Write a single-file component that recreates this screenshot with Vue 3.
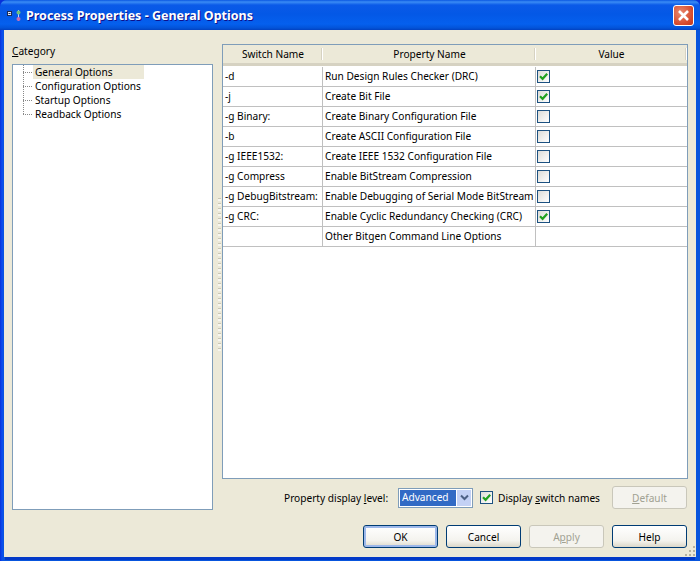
<script setup>
const rows = [
  ['-d', 'Run Design Rules Checker (DRC)', true],
  ['-j', 'Create Bit File', true],
  ['-g Binary:', 'Create Binary Configuration File', false],
  ['-b', 'Create ASCII Configuration File', false],
  ['-g IEEE1532:', 'Create IEEE 1532 Configuration File', false],
  ['-g Compress', 'Enable BitStream Compression', false],
  ['-g DebugBitstream:', 'Enable Debugging of Serial Mode BitStream', false],
  ['-g CRC:', 'Enable Cyclic Redundancy Checking (CRC)', true],
  ['', 'Other Bitgen Command Line Options', null],
]
const cats = ['General Options', 'Configuration Options', 'Startup Options', 'Readback Options']
</script>

<template>
  <div class="win">
    <div class="titlebar">
      <svg class="appicon" width="18" height="15" viewBox="0 0 18 15">
        <rect x="1.5" y="3.5" width="4" height="4" fill="#e6ecf8" stroke="#1a2a55" />
        <path d="M2.5 5.5h2" stroke="#1a2a55" />
        <path d="M12.5 2v11" stroke="#bcd8ff" fill="none" />
        <circle cx="12.5" cy="4.5" r="2" fill="#6fc07a" />
        <circle cx="12.5" cy="11" r="2" fill="#c76bb0" />
      </svg>
      <span class="title">Process Properties - General Options</span>
      <button class="close">
        <svg width="13" height="13" viewBox="0 0 13 13"><path d="M2 2l9 9M11 2l-9 9" stroke="#fff" stroke-width="2.6" /></svg>
      </button>
    </div>
    <div class="body">
      <div class="main">
        <div class="left">
          <div class="cat-label"><u>C</u>ategory</div>
          <div class="tree">
            <div v-for="(c, i) in cats" :key="c" class="tree-row" :class="{ last: i === cats.length - 1 }">
              <span class="dots"></span>
              <span class="tree-text" :class="{ sel: i === 0 }">{{ c }}</span>
            </div>
          </div>
        </div>
        <div class="grip"></div>
        <div class="right">
          <div class="table">
            <div class="thead">
              <div class="th c1">Switch Name</div>
              <div class="th c2">Property Name</div>
              <div class="th c3">Value</div>
            </div>
            <div v-for="r in rows" :key="r[1]" class="tr">
              <div class="td c1">{{ r[0] }}</div>
              <div class="td c2">{{ r[1] }}</div>
              <div class="td c3">
                <span v-if="r[2] !== null" class="cb">
                  <svg v-if="r[2]" width="11" height="11" viewBox="0 0 11 11"><path d="M2 5.2l2.6 2.6 4.6-5" fill="none" stroke="#21a121" stroke-width="2.2" /></svg>
                </span>
              </div>
            </div>
          </div>
          <div class="opts">
            <span class="lvl">Property display <u>l</u>evel:</span>
            <div class="select">
              <span class="sel-val">Advanced</span>
              <span class="sel-btn">
                <svg width="9" height="7" viewBox="0 0 9 7"><path d="M1 1.5l3.5 3.5 3.5-3.5" fill="none" stroke="#4d6185" stroke-width="2" /></svg>
              </span>
            </div>
            <span class="cb small">
              <svg width="11" height="11" viewBox="0 0 11 11"><path d="M2 5.2l2.6 2.6 4.6-5" fill="none" stroke="#21a121" stroke-width="2.2" /></svg>
            </span>
            <span class="disp">Display <u>s</u>witch names</span>
            <button class="btn dis def"><span><u>D</u>efault</span></button>
          </div>
        </div>
      </div>
      <div class="actions">
        <button class="btn primary">OK</button>
        <button class="btn">Cancel</button>
        <button class="btn dis"><span>A<u>p</u>ply</span></button>
        <button class="btn">Help</button>
      </div>
      <svg class="sizer" width="12" height="12" viewBox="0 0 12 12" fill="#b5b2a0">
        <rect x="9" y="1" width="2" height="2" /><rect x="5" y="5" width="2" height="2" /><rect x="9" y="5" width="2" height="2" />
        <rect x="1" y="9" width="2" height="2" /><rect x="5" y="9" width="2" height="2" /><rect x="9" y="9" width="2" height="2" />
      </svg>
    </div>
  </div>
</template>

<style>
html, body { margin: 0; padding: 0; background: #0831d9; }
</style>

<style scoped>
.win {
  width: 700px;
  height: 561px;
  box-sizing: border-box;
  display: flex;
  flex-direction: column;
  font-family: "Noto Sans", "Liberation Sans", sans-serif;
  font-size: 10.15px;
  color: #000;
  border-radius: 7px 7px 0 0;
  overflow: hidden;
  background: linear-gradient(90deg, #0831d9 0, #0a4df0 2px, #0855dd 4px);
}
.titlebar {
  height: 30px;
  flex: none;
  display: flex;
  align-items: center;
  padding: 0 6px 0 6px;
  background: linear-gradient(180deg, #0a57e2 0, #3a8cf5 2px, #0a5ae8 5px, #0458e6 14px, #0560ee 24px, #0353d8 28px, #0241c0 30px);
  color: #fff;
}
.appicon { flex: none; margin-right: 2px; }
.title {
  flex: 1;
  padding-top: 3px;
  font: 700 12.5px/1 "Noto Sans", "Liberation Sans", sans-serif;
  text-shadow: 1px 1px 0 #0f1089;
}
.close {
  width: 21px;
  height: 21px;
  padding: 0;
  border: 1px solid #fff;
  border-radius: 3px;
  display: flex;
  align-items: center;
  justify-content: center;
  background: radial-gradient(circle at 35% 35%, #e98a70, #d5482a 70%, #c23a1e);
}
.body {
  position: relative;
  flex: 1;
  box-sizing: border-box;
  margin: 0 4px 4px;
  background: #ece9d8;
  padding: 14px 8px 0;
  display: flex;
  flex-direction: column;
  min-height: 0;
  box-shadow: 0 4px 0 -1px #0239c7;
}
.main { display: flex; height: 466px; flex: none; }
.left { width: 201px; flex: none; display: flex; flex-direction: column; }
.cat-label { height: 20px; line-height: 14px; }
.tree {
  flex: 1;
  background: #fff;
  border: 1px solid #7f9db9;
  padding: 0 0 0 8px;
}
.tree-row { position: relative; display: flex; align-items: center; height: 14px; }
.dots {
  width: 12px;
  flex: none;
  height: 14px;
  box-sizing: border-box;
  background:
    repeating-linear-gradient(90deg, #888 0 1px, transparent 1px 2px) 2px 7px / 10px 1px no-repeat,
    repeating-linear-gradient(180deg, #888 0 1px, transparent 1px 2px) 2px 0 / 1px 14px no-repeat;
}
.last .dots {
  background:
    repeating-linear-gradient(90deg, #888 0 1px, transparent 1px 2px) 2px 7px / 10px 1px no-repeat,
    repeating-linear-gradient(180deg, #888 0 1px, transparent 1px 2px) 2px 0 / 1px 8px no-repeat;
}
.tree-text { padding: 0 2px; line-height: 14px; white-space: nowrap; }
.sel { background: #ece9d8; width: 111px; box-sizing: border-box; }
.grip {
  width: 3px;
  flex: none;
  margin: 154px 1px 0 5px;
  height: 154px;
  background: repeating-linear-gradient(180deg, #c9c6b4 0 1px, #f7f6f0 1px 3px, transparent 3px 5px);
}
.right { flex: 1; display: flex; flex-direction: column; min-width: 0; }
.table {
  height: 435px;
  flex: none;
  box-sizing: border-box;
  background: #fff;
  border: 1px solid #7f9db9;
}
.thead { display: flex; background: #ece9d8; border-bottom: 3px solid #d6d2c2; height: 18px; }
.th { text-align: center; line-height: 18px; position: relative; box-sizing: border-box; }
.th::after { content: ""; position: absolute; right: 0; top: 3px; bottom: 3px; width: 1px; background: #fff; box-shadow: -1px 0 0 #d6d2c2; }
.tr { display: flex; height: 20px; border-bottom: 1px solid #c0c0c0; box-sizing: border-box; position: relative; top: 1px; }
.c1 { width: 100px; flex: none; }
.c2 { width: 213px; flex: none; }
.c3 { width: 151px; flex: none; }
.td { box-sizing: border-box; border-right: 1px solid #c0c0c0; padding: 0 0 0 2px; line-height: 19px; white-space: nowrap; overflow: hidden; }
.td.c3 { border-right: 0; padding-left: 1px; display: flex; align-items: center; }
.cb {
  width: 13px;
  height: 13px;
  box-sizing: border-box;
  border: 1px solid #1c5180;
  background: linear-gradient(135deg, #dcdcd7, #fff);
  display: inline-flex;
  align-items: center;
  justify-content: center;
  flex: none;
}
.opts { display: flex; align-items: center; height: 23px; margin-top: 7px; flex: none; }
.lvl { margin-left: 62px; width: 114px; flex: none; white-space: nowrap; }
.select {
  width: 75px;
  height: 20px;
  flex: none;
  box-sizing: border-box;
  border: 1px solid #7f9db9;
  padding: 1px;
  display: flex;
  background: #fff;
}
.sel-val { flex: 1; background: #316ac5; color: #fff; line-height: 15px; padding-left: 2px; }
.sel-btn {
  width: 14px;
  margin-left: 1px;
  background: #c3d1f5;
  display: flex;
  align-items: center;
  justify-content: center;
}
.cb.small { margin-left: 7px; }
.disp { margin-left: 5px; white-space: nowrap; }
.btn {
  width: 75px;
  height: 23px;
  box-sizing: border-box;
  padding: 0;
  font: inherit;
  color: #000;
  border: 1px solid #003c74;
  border-radius: 3px;
  background: linear-gradient(180deg, #fff, #f4f3ee 70%, #dcd8c9);
  flex: none;
}
.btn.dis { border-color: #c9c7ba; background: #f4f3ee; color: #a1a192; }
.btn.primary { box-shadow: inset 0 0 0 2px #9db8ea; }
.def { margin-left: auto; margin-right: 1px; }
.actions { display: flex; justify-content: flex-end; gap: 8px; padding: 15px 1px 0 0; flex: none; }
.sizer { position: absolute; right: 0; bottom: 0; }
</style>
